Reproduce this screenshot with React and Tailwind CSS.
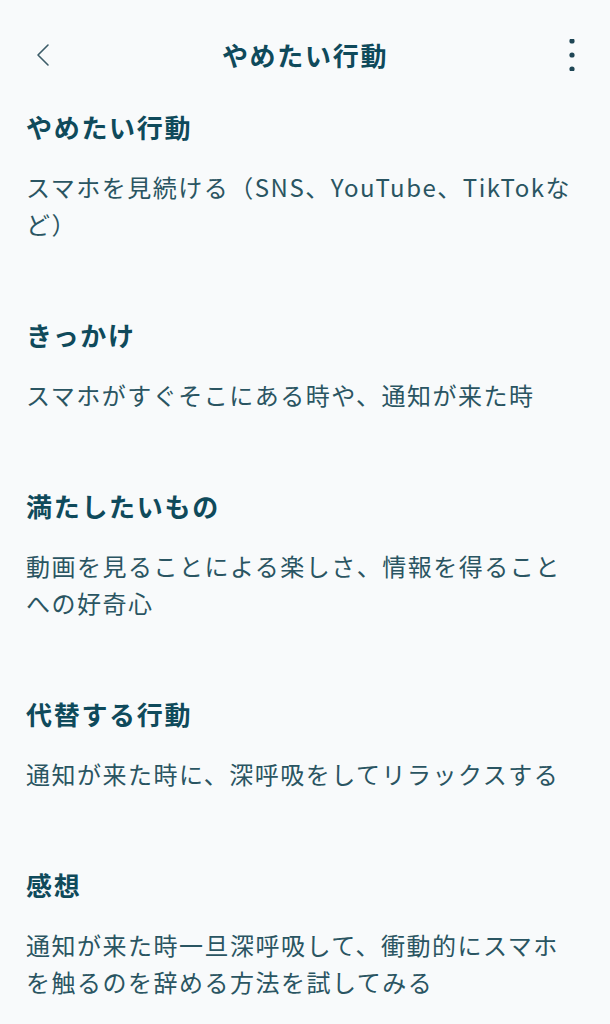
import React from 'react'

const SECTIONS = [
  { title: 'やめたい行動', body: 'スマホを見続ける（SNS、YouTube、TikTokなど）' },
  { title: 'きっかけ', body: 'スマホがすぐそこにある時や、通知が来た時' },
  { title: '満たしたいもの', body: '動画を見ることによる楽しさ、情報を得ることへの好奇心' },
  { title: '代替する行動', body: '通知が来た時に、深呼吸をしてリラックスする' },
  { title: '感想', body: '通知が来た時一旦深呼吸して、衝動的にスマホを触るのを辞める方法を試してみる' }
]

export default function App() {
  return (
    <div
      lang="ja"
      className="min-h-screen w-full bg-[#f8fafb] overflow-hidden"
      style={{ fontFamily: '"Noto Sans CJK JP", "Noto Sans", sans-serif' }}
    >
      {/* Header */}
      <header className="h-[109px] flex items-center justify-between px-[26px]">
        <button className="w-[32px] h-[32px] flex items-center justify-start pl-[10px]">
          <svg width="14" height="24" viewBox="0 0 14 24" fill="none">
            <polyline points="12,2 2,12 12,22" stroke="#3c5c68" strokeWidth="1.6" strokeLinecap="round" strokeLinejoin="round" />
          </svg>
        </button>
        <h1 className="text-[26px] leading-[36px] font-bold tracking-[1.7px] text-[#0f4a5b]">やめたい行動</h1>
        <button className="w-[32px] h-[32px] flex items-center justify-end pr-[9px]">
          <svg width="6" height="32" viewBox="0 0 6 32" fill="#1f4655">
            <circle cx="3" cy="2" r="2.6" />
            <circle cx="3" cy="16" r="2.6" />
            <circle cx="3" cy="30" r="2.6" />
          </svg>
        </button>
      </header>

      {/* Content */}
      <main className="px-[26px] flex flex-col gap-[75px]">
        {SECTIONS.map((s) => (
          <section key={s.title} className="flex flex-col gap-[23px]">
            <h2 className="text-[26px] leading-[36px] font-bold tracking-[1.7px] text-[#0f4a5b]">{s.title}</h2>
            <p className="text-[24px] leading-[37px] tracking-[1.5px] text-[#2a5562]">{s.body}</p>
          </section>
        ))}
      </main>
    </div>
  )
}
